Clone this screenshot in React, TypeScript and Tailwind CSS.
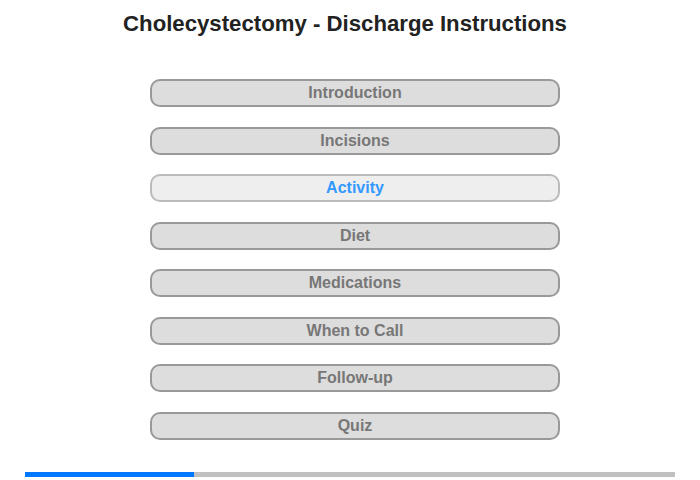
export default function App() {
  const items = [
    "Introduction",
    "Incisions",
    "Activity",
    "Diet",
    "Medications",
    "When to Call",
    "Follow-up",
    "Quiz",
  ];
  const active = "Activity";

  return (
    <div className="w-[700px] h-[480px] bg-white flex flex-col font-['Liberation_Sans',Arial,sans-serif]">
      {/* Title */}
      <h1 className="pt-[12px] pr-[10px] text-center text-[22.2px] leading-6 font-bold text-[#222]">
        Cholecystectomy - Discharge Instructions
      </h1>

      {/* Menu */}
      <div className="mt-[43px] pl-[10px] flex flex-col items-center gap-[19.5px]">
        {items.map((item) => {
          const on = item === active;
          return (
            <div
              key={item}
              className={
                on
                  ? "w-[410px] h-[28px] rounded-[10px] border-2 border-[#bbb] bg-[#eee] flex items-center justify-center text-[16px] font-bold text-[#3399ff]"
                  : "w-[410px] h-[28px] rounded-[10px] border-2 border-[#999] bg-[#ddd] flex items-center justify-center text-[16px] font-bold text-[#777]"
              }
            >
              {item}
            </div>
          );
        })}
      </div>

      {/* Progress */}
      <div className="mt-[32.5px] mx-[25px] h-[5px] bg-[#c0c0c0] flex">
        <div className="w-[169px] h-full bg-[#0077ff]" />
      </div>
    </div>
  );
}
